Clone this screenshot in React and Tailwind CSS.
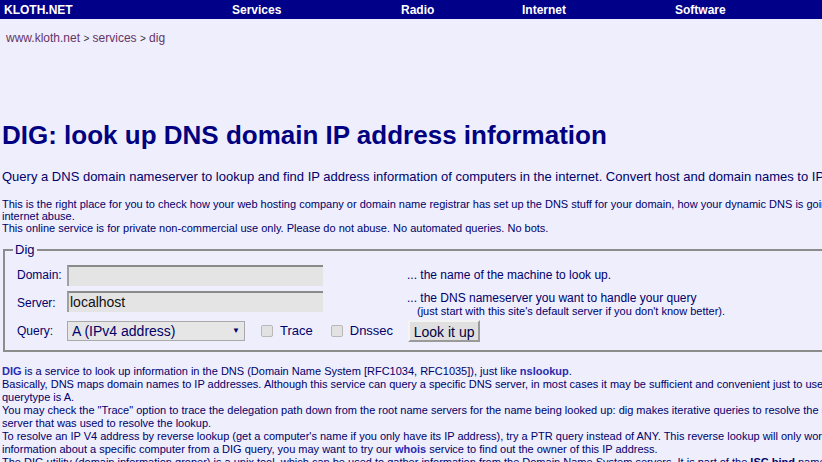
import React from "react";

const B = ({ children }) => <b className="font-bold text-[#2b2bb0]">{children}</b>;

export default function App() {
  return (
    <div className="w-[822px] h-[462px] overflow-hidden bg-[#eeeefd] font-['Liberation_Sans',Arial,sans-serif] text-[#00006a]">
      <div className="w-[960px]">
        <div className="flex h-[19px] items-center bg-[#000088] text-[12px] font-bold text-white">
          <span className="w-[232px] pl-[4px]">KLOTH.NET</span>
          <span className="w-[169px]">Services</span>
          <span className="w-[121px]">Radio</span>
          <span className="w-[153px]">Internet</span>
          <span>Software</span>
        </div>
        <div className="mt-[10px] pl-[6px] text-[12px] text-[#663366]">
          www.kloth.net <span className="text-[10px] text-[#333]">&gt;</span> services{" "}
          <span className="text-[10px] text-[#333]">&gt;</span> dig
        </div>
        <h1 className="mt-[73px] pl-[2px] text-[26px] font-bold leading-[30px] text-[#000080]">
          DIG: look up DNS domain IP address information
        </h1>
        <p className="mt-[19px] whitespace-nowrap pl-[2px] text-[13px] leading-[16px]">
          Query a DNS domain nameserver to lookup and find IP address information of computers in the internet. Convert host and domain names to IP addresses and vice versa.
        </p>
        <div className="mt-[13px] pl-[2px] text-[11px] leading-[12px]">
          <div className="whitespace-nowrap">
            This is the right place for you to check how your web hosting company or domain name registrar has set up the DNS stuff for your domain, how your dynamic DNS is going, or to trace
          </div>
          <div className="whitespace-nowrap">internet abuse.</div>
          <div className="whitespace-nowrap">
            This online service is for private non-commercial use only. Please do not abuse. No automated queries. No bots.
          </div>
        </div>
        <fieldset className="ml-[3px] mt-[9px] w-[900px] border-2 border-[#8c8c8c] pb-[7px] pl-[12px] pt-0">
          <legend className="-ml-[4px] px-[2px] text-[13px] leading-[14px]">Dig</legend>
          <div className="mt-[7px] flex h-[22px] items-center text-[12px]">
            <span className="w-[50px]">Domain:</span>
            <input className="h-[21px] w-[256px] border-l-2 border-t-2 border-l-[#a0a0a0] border-t-[#8a8a8a] bg-[#e4e4e4] px-[3px] text-[14px] outline-none" />
            <span className="ml-[84px]">... the name of the machine to look up.</span>
          </div>
          <div className="mt-[5px] flex items-start text-[12px]">
            <span className="mt-[3px] w-[50px]">Server:</span>
            <input
              readOnly
              value="localhost"
              className="h-[21px] w-[256px] border-l-2 border-t-2 border-l-[#a0a0a0] border-t-[#8a8a8a] bg-[#e4e4e4] px-[1px] font-['Liberation_Sans',Arial,sans-serif] text-[14px] text-[#111] outline-none"
            />
            <div className="ml-[84px] leading-[14px]">
              <div>... the DNS nameserver you want to handle your query</div>
              <div className="pl-[10px] text-[11px] leading-[13px]">
                (just start with this site's default server if you don't know better).
              </div>
            </div>
          </div>
          <div className="mt-[1px] flex h-[24px] items-center text-[12px]">
            <span className="w-[50px]">Query:</span>
            <div className="flex h-[20px] w-[178px] items-center justify-between border border-[#a9a9a9] bg-[#e6e6e6] pl-[4px] pr-[4px] text-[14px] text-[#00006a]">
              <span>A (IPv4 address)</span>
              <span className="text-[8px] text-[#000066]">▼</span>
            </div>
            <span className="ml-[16px] h-[12px] w-[12px] rounded-[2px] border border-[#b8b8b8] bg-[#e2e2e2]"></span>
            <span className="ml-[7px] text-[13px]">Trace</span>
            <span className="ml-[18px] h-[12px] w-[12px] rounded-[2px] border border-[#b8b8b8] bg-[#e2e2e2]"></span>
            <span className="ml-[7px] text-[13px]">Dnssec</span>
            <button className="ml-[15px] h-[22px] w-[72px] border-2 border-b-[#9a9a9a] border-l-[#f4f4f4] border-r-[#9a9a9a] border-t-[#f4f4f4] bg-[#e0e0e0] text-[14px] text-[#000040]">
              Look it up
            </button>
          </div>
        </fieldset>
        <div className="mt-[13px] pl-[2px] text-[11px] leading-[13px]">
          <div className="whitespace-nowrap">
            <B>DIG</B> is a service to look up information in the DNS (Domain Name System [RFC1034, RFC1035]), just like <B>nslookup</B>.
          </div>
          <div className="whitespace-nowrap">
            Basically, DNS maps domain names to IP addresses. Although this service can query a specific DNS server, in most cases it may be sufficient and convenient just to use the default
          </div>
          <div className="whitespace-nowrap">querytype is A.</div>
          <div className="whitespace-nowrap">
            You may check the "Trace" option to trace the delegation path down from the root name servers for the name being looked up: dig makes iterative queries to resolve the name
          </div>
          <div className="whitespace-nowrap">server that was used to resolve the lookup.</div>
          <div className="whitespace-nowrap">
            To resolve an IP V4 address by reverse lookup (get a computer's name if you only have its IP address), try a PTR query instead of ANY. This reverse lookup will only work if
          </div>
          <div className="whitespace-nowrap">
            information about a specific computer from a DIG query, you may want to try our <B>whois</B> service to find out the owner of this IP address.
          </div>
          <div className="whitespace-nowrap">
            The DIG utility (domain information groper) is a unix tool, which can be used to gather information from the Domain Name System servers. It is part of the <b className="font-bold">ISC bind</b> nameserver software package.
          </div>
        </div>
      </div>
    </div>
  );
}
